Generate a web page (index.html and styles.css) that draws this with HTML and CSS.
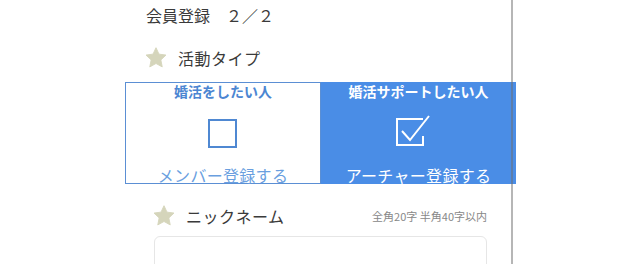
FILE: index.html
```html
<!DOCTYPE html>
<html lang="ja">
<head>
<meta charset="utf-8">
<link rel="stylesheet" href="styles.css">
</head>
<body>
<div class="page">
  <div class="title">会員登録　２／２</div>
  <div class="head head-type">
    <svg class="star" viewBox="0 0 24 24" width="22" height="22"><path d="M12 0.8l3.3 7 7.6 1-5.6 5.3 1.5 7.6L12 18l-6.8 3.7 1.5-7.6L1.1 8.8l7.6-1z" fill="#d5d5bb" stroke="#d5d5bb" stroke-width="1" stroke-linejoin="round"/></svg>
    <span class="head-text">活動タイプ</span>
  </div>
  <div class="choices">
    <div class="choice choice-off">
      <div class="choice-top">婚活をしたい人</div>
      <svg class="box" viewBox="0 0 40 32" width="40" height="32"><rect x="6" y="3" width="27" height="27" fill="none" stroke="#4f88d2" stroke-width="2"/></svg>
      <div class="choice-bottom">メンバー登録する</div>
    </div>
    <div class="choice choice-on">
      <div class="choice-top">婚活サポートしたい人</div>
      <svg class="box" viewBox="0 0 50 36" width="50" height="36"><path d="M29 6H3v26h26v-9" fill="none" stroke="#fff" stroke-width="2"/><path d="M8 18l8 9L35 3" fill="none" stroke="#fff" stroke-width="2"/></svg>
      <div class="choice-bottom">アーチャー登録する</div>
    </div>
  </div>
  <div class="head head-nick">
    <svg class="star" viewBox="0 0 24 24" width="22" height="22"><path d="M12 0.8l3.3 7 7.6 1-5.6 5.3 1.5 7.6L12 18l-6.8 3.7 1.5-7.6L1.1 8.8l7.6-1z" fill="#d5d5bb" stroke="#d5d5bb" stroke-width="1" stroke-linejoin="round"/></svg>
    <span class="head-text">ニックネーム</span>
    <span class="note">全角20字 半角40字以内</span>
  </div>
  <div class="input"></div>
  <div class="divider"></div>
</div>
</body>
</html>
```
FILE: styles.css
```css
html, body {
  margin: 0;
  padding: 0;
  background: #fff;
}
.page {
  position: relative;
  width: 640px;
  height: 264px;
  overflow: hidden;
  font-family: "Noto Sans CJK JP", "Noto Sans", sans-serif;
  color: #3a3a3a;
}
.title {
  margin-left: 146px;
  padding-top: 3px;
  height: 24px;
  line-height: 24px;
  font-size: 16px;
}
.head {
  display: flex;
  align-items: center;
  height: 24px;
}
.head-type {
  margin-top: 19px;
  margin-left: 145px;
}
.star {
  display: block;
}
.head-text {
  font-size: 16px;
  margin-left: 11px;
  letter-spacing: 0.5px;
}
.choices {
  display: flex;
  margin-top: 12px;
  margin-left: 125px;
  width: 391px;
  height: 102px;
}
.choice {
  display: flex;
  flex-direction: column;
  align-items: center;
  box-sizing: border-box;
}
.choice-off {
  width: 196px;
  border: 1px solid #5b8fd4;
  color: #4c86d2;
}
.choice-on {
  width: 195px;
  background: #4a8de6;
  color: #fff;
}
.choice-top {
  font-size: 14px;
  font-weight: bold;
  line-height: 18px;
  height: 18px;
}
.choice-off .choice-top {
  margin-top: -1px;
}
.choice-off .box {
  margin-top: 17px;
}
.choice-on .box {
  margin-top: 13px;
}
.choice-bottom {
  font-size: 16px;
  line-height: 20px;
  margin-top: auto;
  margin-bottom: -1px;
  letter-spacing: 0.3px;
}
.choice-off .choice-bottom {
  color: #6a9fdf;
  margin-bottom: -2px;
}
.head-nick {
  margin-top: 20px;
  margin-left: 153px;
  width: 334px;
}
.head-nick .head-text {
  margin-left: 11px;
}
.note {
  margin-left: auto;
  font-size: 11px;
  color: #888;
}
.input {
  margin-top: 8px;
  margin-left: 154px;
  width: 333px;
  height: 60px;
  border: 1px solid #e6e6e6;
  border-radius: 6px;
  box-sizing: border-box;
}
.divider {
  position: absolute;
  left: 511px;
  top: 0;
  width: 2px;
  height: 264px;
  background: rgba(110, 110, 110, 0.5);
}
```
